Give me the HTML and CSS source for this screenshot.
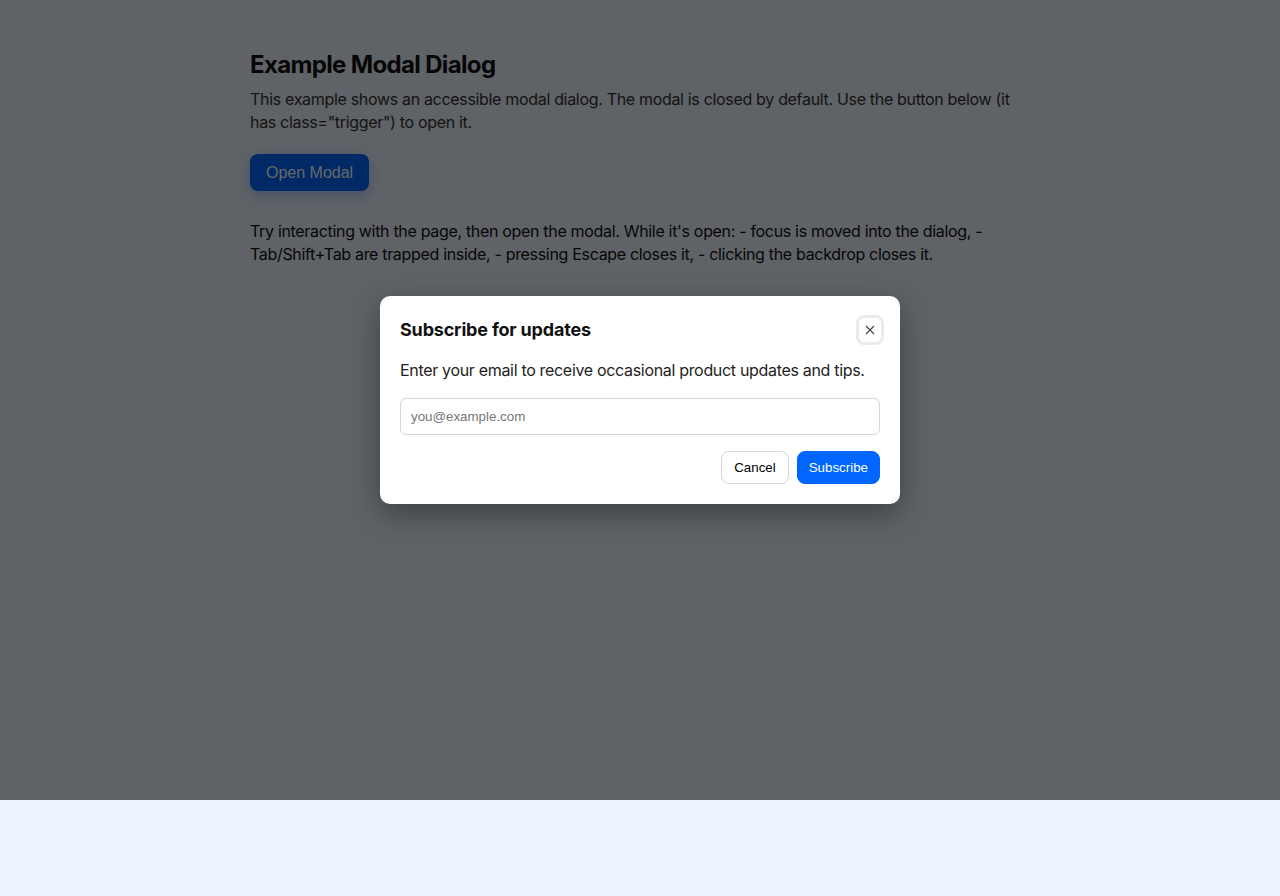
FILE: index.html
```html
<!DOCTYPE html>
<html lang="en">
<head>
  <meta charset="UTF-8">
  <meta name="viewport" content="width=device-width, initial-scale=1.0">
  <title>Example Modal Dialog</title>
  <link rel="stylesheet" href="styles.css">
</head>
<body>
  <main class="page">
    <h1>Example Modal Dialog</h1>
    <p class="lead">This example shows an accessible modal dialog. The modal is closed by default. Use the button below (it has class="trigger") to open it.</p>
    <button class="trigger">Open Modal</button>
    <p class="note">Try interacting with the page, then open the modal. While it's open: - focus is moved into the dialog, - Tab/Shift+Tab are trapped inside, - pressing Escape closes it, - clicking the backdrop closes it.</p>
  </main>

  <div class="backdrop">
    <div class="modal" role="dialog" aria-modal="true" aria-labelledby="modalTitle">
      <div class="modal-header">
        <h2 id="modalTitle">Subscribe for updates</h2>
        <button class="close" aria-label="Close">
          <svg width="10" height="10" viewBox="0 0 10 10"><path d="M1 1L9 9M9 1L1 9" stroke="#444" stroke-width="1.1" fill="none"/></svg>
        </button>
      </div>
      <p class="modal-text">Enter your email to receive occasional product updates and tips.</p>
      <input type="email" class="email" placeholder="you@example.com">
      <div class="actions">
        <button class="btn">Cancel</button>
        <button class="btn primary">Subscribe</button>
      </div>
    </div>
  </div>
</body>
</html>
```

FILE: styles.css
```css
html {
  background-color: #eef4ff;
}
body {
  margin: 0;
  font-family: Inter, "Noto Sans", sans-serif;
  color: #111;
  letter-spacing: -0.02em;
}
.page {
  width: 780px;
  margin: 0 auto;
  padding-top: 50px;
}
h1 {
  margin: 0;
  font-size: 24px;
  line-height: 29px;
  font-weight: 700;
  letter-spacing: -0.027em;
}
.lead {
  margin: 9px 0 20px;
  font-size: 16px;
  line-height: 23px;
  color: #333;
}
.trigger {
  display: block;
  font-family: "Liberation Sans", Arial, sans-serif;
  font-size: 16px;
  line-height: 19px;
  letter-spacing: 0;
  padding: 9px 16px;
  border: none;
  border-radius: 8px;
  background-color: #0066ff;
  color: #fff;
  box-shadow: 0 4px 12px rgba(0, 102, 255, 0.3);
}
.note {
  margin: 29px 0 0;
  font-size: 16px;
  line-height: 23px;
}
.backdrop {
  position: absolute;
  top: 0;
  left: 0;
  width: 100%;
  height: 800px;
  background-color: rgba(0, 0, 0, 0.6);
  display: flex;
  align-items: center;
  justify-content: center;
}
.modal {
  width: 520px;
  box-sizing: border-box;
  padding: 20px;
  background-color: #fff;
  border-radius: 10px;
  box-shadow: 0 10px 30px rgba(0, 0, 0, 0.35);
}
.modal-header {
  display: flex;
  align-items: center;
  justify-content: space-between;
  height: 28px;
}
.modal-header h2 {
  margin: 0 0 1px;
  font-size: 18px;
  font-weight: 700;
  letter-spacing: -0.01em;
}
.close {
  width: 28px;
  height: 30px;
  box-sizing: border-box;
  margin-right: -4px;
  padding: 0;
  display: flex;
  align-items: center;
  justify-content: center;
  background-color: #fff;
  border: 3px solid #ebebeb;
  border-radius: 8px;
}
.modal-text {
  margin: 14px 0 16px;
  font-size: 16px;
  line-height: 24px;
  color: #222;
}
.email {
  display: block;
  width: 100%;
  height: 37px;
  box-sizing: border-box;
  padding: 0 10px;
  font-family: "Liberation Sans", Arial, sans-serif;
  font-size: 13.33px;
  letter-spacing: 0;
  border: 1px solid #cdd6e3;
  border-radius: 6px;
}
.email::placeholder {
  color: #767676;
}
.actions {
  display: flex;
  justify-content: flex-end;
  gap: 8px;
  margin-top: 16px;
}
.btn {
  font-family: "Liberation Sans", Arial, sans-serif;
  font-size: 13.33px;
  line-height: 15px;
  letter-spacing: 0;
  padding: 8px 12px;
  border: 1px solid #d4d8de;
  border-radius: 8px;
  background-color: #fff;
  color: #000;
}
.btn.primary {
  padding: 8px 11px;
  background-color: #0066ff;
  border-color: #0066ff;
  color: #fff;
}
```
